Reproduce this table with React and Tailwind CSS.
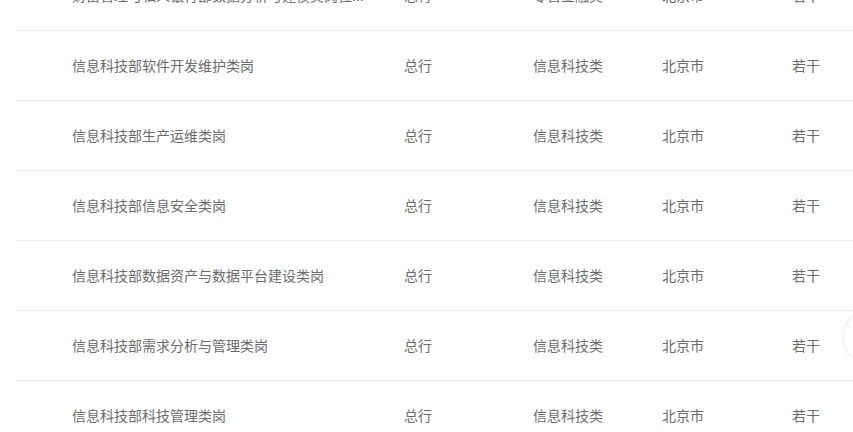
import React from "react"

const jobs = [
  { name: "财富管理与私人银行部数据分析与建模类岗位...", org: "总行", type: "零售金融类", city: "北京市", num: "若干" },
  { name: "信息科技部软件开发维护类岗", org: "总行", type: "信息科技类", city: "北京市", num: "若干" },
  { name: "信息科技部生产运维类岗", org: "总行", type: "信息科技类", city: "北京市", num: "若干" },
  { name: "信息科技部信息安全类岗", org: "总行", type: "信息科技类", city: "北京市", num: "若干" },
  { name: "信息科技部数据资产与数据平台建设类岗", org: "总行", type: "信息科技类", city: "北京市", num: "若干" },
  { name: "信息科技部需求分析与管理类岗", org: "总行", type: "信息科技类", city: "北京市", num: "若干" },
  { name: "信息科技部科技管理类岗", org: "总行", type: "信息科技类", city: "北京市", num: "若干" },
]

const App = () => {
  return (
    <div
      className="relative h-[432px] w-full overflow-hidden bg-white text-[14px] text-[#6b6b6b]"
      style={{ fontFamily: '"Microsoft YaHei", "Noto Sans CJK SC", "Noto Sans", sans-serif' }}
    >
      {/* job list */}
      <div className="mt-[-39px] pl-4">
        {jobs.map((job, i) => (
          <div
            key={i}
            className="flex h-[70px] items-center border-b border-[#eeeeee] pl-14"
          >
            <div className="w-[332px] whitespace-nowrap">{job.name}</div>
            <div className="w-[129px]">{job.org}</div>
            <div className="w-[129px]">{job.type}</div>
            <div className="w-[130px]">{job.city}</div>
            <div>{job.num}</div>
          </div>
        ))}
      </div>

      {/* floating button */}
      <div className="absolute left-[843px] top-[309px] h-[56px] w-[56px] rounded-full border border-[#eeeeee] bg-white shadow-[0_0_6px_rgba(0,0,0,0.05)]"></div>
    </div>
  )
}

export default App
